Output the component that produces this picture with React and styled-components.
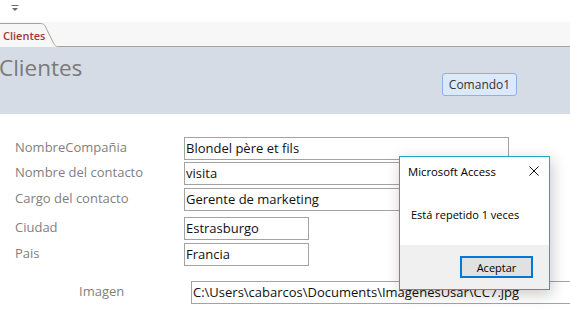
import styled, { createGlobalStyle } from "styled-components";

const GlobalStyle = createGlobalStyle`
  html, body {
    margin: 0;
    padding: 0;
    background: #ffffff;
    overflow: hidden;
  }
  body {
    font-family: "Open Sans", "Noto Sans", sans-serif;
  }
`;

const Page = styled.div`
  position: relative;
  width: 570px;
  height: 312px;
  overflow: hidden;
  display: flex;
  flex-direction: column;
`;

const QuickBar = styled.div`
  height: 22px;
  display: flex;
  align-items: flex-start;
  padding: 4px 0 0 11px;
  box-sizing: border-box;
  background: #ffffff;
`;

const TabStrip = styled.div`
  height: 25px;
  display: flex;
  background: #f7f7f7;
`;

const Tab = styled.div`
  position: relative;
  width: 58px;
  display: flex;
  align-items: center;
  padding: 2px 0 0 3px;
  box-sizing: border-box;
  font-family: "Open Sans", sans-serif;
  font-size: 11px;
  font-weight: 600;
  color: #a9353a;

  svg {
    position: absolute;
    left: 0;
    top: 0;
  }
  span {
    position: relative;
  }
`;

const TabFill = styled.div`
  flex: 1;
  border-bottom: 1px solid #a8a29a;
`;

const Header = styled.div`
  height: 67px;
  background: #d6dce5;
  display: flex;
  align-items: flex-start;
  justify-content: space-between;
  padding: 0 53px 0 0;
  box-sizing: border-box;
`;

const Title = styled.h1`
  margin: 5px 0 0 -1px;
  font-family: "Open Sans", sans-serif;
  font-weight: 400;
  font-size: 22.5px;
  color: #7a7a7a;
`;

const CommandButton = styled.button`
  margin-top: 26px;
  width: 75px;
  height: 23px;
  padding: 0;
  border: 1px solid #8fb0e3;
  border-radius: 3px;
  background: #dde9fb;
  font-family: "Open Sans", sans-serif;
  font-size: 12px;
  color: #333333;
`;

const Body = styled.div`
  flex: 1;
  display: flex;
  flex-direction: column;
  padding: 23px 0 0 15px;
`;

const Row = styled.div`
  display: grid;
  grid-template-columns: ${(p) => p.$labelWidth || 169}px auto;
  align-items: center;
  margin-top: ${(p) => p.$top || 0}px;
  padding-left: ${(p) => p.$indent || 0}px;
`;

const Label = styled.div`
  font-family: "Open Sans", sans-serif;
  font-size: 13px;
  line-height: 18px;
  margin-top: -4px;
  color: #7f7f7f;
  white-space: nowrap;
`;

const Field = styled.div`
  width: ${(p) => p.$width}px;
  height: 23px;
  box-sizing: border-box;
  border: 1px solid #a3a3a3;
  padding: 0 2px 1px 1px;
  display: flex;
  align-items: center;
  font-family: "Open Sans", sans-serif;
  font-size: 13px;
  color: #111111;
  white-space: nowrap;
  overflow: hidden;
`;

const Dialog = styled.div`
  position: absolute;
  left: 399px;
  top: 156px;
  width: 151px;
  height: 134px;
  box-sizing: border-box;
  border: 1px solid #20a9c6;
  background: #ffffff;
  box-shadow: 2px 4px 14px rgba(0, 0, 0, 0.22);
  display: flex;
  flex-direction: column;
  font-family: "Open Sans", sans-serif;
  font-size: 11px;
  color: #000000;
`;

const DialogTitle = styled.div`
  height: 28px;
  display: flex;
  align-items: center;
  justify-content: space-between;
  padding: 0 10px 0 8px;
  font-size: 11.3px;
`;

const DialogText = styled.div`
  flex: 1;
  padding: 22px 0 0 11px;
`;

const DialogFooter = styled.div`
  height: 44px;
  background: #f0f0f0;
  display: flex;
  justify-content: flex-end;
  align-items: flex-start;
  padding: 11px 16px 0 0;
  box-sizing: border-box;
`;

const OkButton = styled.button`
  width: 73px;
  height: 22px;
  padding: 0;
  border: 2px solid #0078d7;
  background: #e1e1e1;
  font-family: "Open Sans", sans-serif;
  font-size: 11px;
  color: #000000;
`;

const fields = [
  { label: "NombreCompañia", value: "Blondel père et fils", width: 325, top: 0 },
  { label: "Nombre del contacto", value: "visita", width: 325, top: 2 },
  { label: "Cargo del contacto", value: "Gerente de marketing", width: 325, top: 3 },
  { label: "Ciudad", value: "Estrasburgo", width: 125, top: 6 },
  { label: "Pais", value: "Francia", width: 125, top: 3 },
];

export default function App() {
  return (
    <Page>
      <GlobalStyle />
      <QuickBar>
        <svg width="8" height="8" viewBox="0 0 8 8">
          <rect x="0.5" y="1" width="7" height="1" fill="#6b6b6b" />
          <path d="M1 4 L7 4 L4 7 Z" fill="#6b6b6b" />
        </svg>
      </QuickBar>
      <TabStrip>
        <Tab>
          <svg width="58" height="25" viewBox="0 0 58 25">
            <path
              d="M0 1.5 H40 C44 1.5 45 3 47 8 L53 20 C55 24 56 24.5 58 24.5"
              fill="#f7f7f7"
              stroke="#a8a29a"
              strokeWidth="1"
            />
          </svg>
          <span>Clientes</span>
        </Tab>
        <TabFill />
      </TabStrip>
      <Header>
        <Title>Clientes</Title>
        <CommandButton>Comando1</CommandButton>
      </Header>
      <Body>
        {fields.map((f) => (
          <Row key={f.label} $top={f.top}>
            <Label>{f.label}</Label>
            <Field $width={f.width}>{f.value}</Field>
          </Row>
        ))}
        <Row $top={15} $indent={64} $labelWidth={112}>
          <Label>Imagen</Label>
          <Field $width={400}>C:\Users\cabarcos\Documents\ImagenesUsar\CC7.jpg</Field>
        </Row>
      </Body>
      <Dialog>
        <DialogTitle>
          <span>Microsoft Access</span>
          <svg width="10" height="10" viewBox="0 0 10 10">
            <path d="M0.5 0.5 L9.5 9.5 M9.5 0.5 L0.5 9.5" stroke="#111" strokeWidth="1" />
          </svg>
        </DialogTitle>
        <DialogText>Está repetido 1 veces</DialogText>
        <DialogFooter>
          <OkButton>Aceptar</OkButton>
        </DialogFooter>
      </Dialog>
    </Page>
  );
}
